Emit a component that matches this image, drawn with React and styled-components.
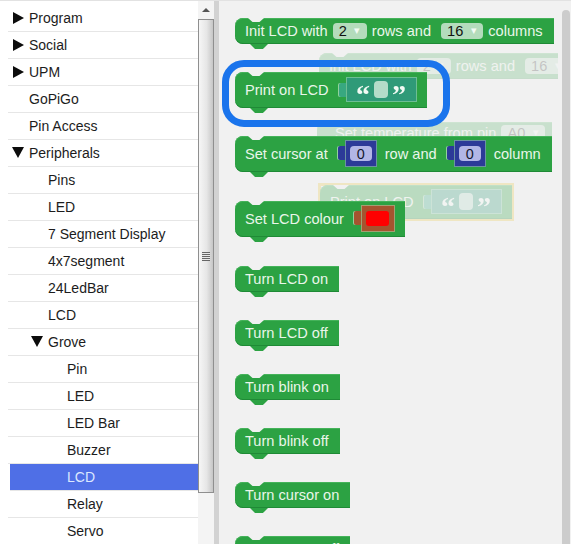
import React from 'react'
import styled, { createGlobalStyle } from 'styled-components'

const Global = createGlobalStyle`
    html, body {
        margin: 0;
        padding: 0;
        background: #ffffff;
    }
    body {
        font-family: "Liberation Sans", Arial, sans-serif;
    }
`

const tree = [
    { label: 'Program', level: 0, arrow: 'closed' },
    { label: 'Social', level: 0, arrow: 'closed' },
    { label: 'UPM', level: 0, arrow: 'closed' },
    { label: 'GoPiGo', level: 0 },
    { label: 'Pin Access', level: 0 },
    { label: 'Peripherals', level: 0, arrow: 'open' },
    { label: 'Pins', level: 1 },
    { label: 'LED', level: 1 },
    { label: '7 Segment Display', level: 1 },
    { label: '4x7segment', level: 1 },
    { label: '24LedBar', level: 1 },
    { label: 'LCD', level: 1 },
    { label: 'Grove', level: 1, arrow: 'open' },
    { label: 'Pin', level: 2 },
    { label: 'LED', level: 2 },
    { label: 'LED Bar', level: 2 },
    { label: 'Buzzer', level: 2 },
    { label: 'LCD', level: 2, selected: true },
    { label: 'Relay', level: 2 },
    { label: 'Servo', level: 2 },
]

function Dropdown({ value, spaced }) {
    return (
        <Pill $spaced={spaced}>
            {value}
            <Caret>▾</Caret>
        </Pill>
    )
}

function TextSocket() {
    return (
        <Socket $bg="#2f9a78" $tab="#38a880" $width={71} $height={25}>
            <Quote>“</Quote>
            <TextHole />
            <Quote>”</Quote>
        </Socket>
    )
}

function NumberSocket() {
    return (
        <Socket $bg="#2c3a98" $width={32} $height={27}>
            <NumberHole>0</NumberHole>
        </Socket>
    )
}

function App() {
    return (
        <Page>
            <Global />
            <Sidebar>
                <Tree>
                    {tree.map((item, i) => (
                        <Row key={i} $level={item.level} $selected={item.selected}>
                            <Toggle $arrow={item.arrow} />
                            {item.label}
                        </Row>
                    ))}
                </Tree>
                <Scrollbar>
                    <ScrollButton />
                    <Thumb>
                        <Grip />
                    </Thumb>
                </Scrollbar>
            </Sidebar>
            <Splitter />
            <Workspace>
                <Ghost $left={100} $top={52} $width={239}>
                    <Block $pr={10}>
                        Init LCD with
                        <Dropdown value="2" />
                        rows and
                        <Dropdown value="16" spaced />
                    </Block>
                </Ghost>
                <Ghost $left={98} $top={121}>
                    <Block $pr={7} $pl={18} $h={22}>
                        Set temperature from pin
                        <Dropdown value="A0" />
                    </Block>
                </Ghost>
                <Ghost $left={101} $top={184} $outline>
                    <Block $pr={10} $h={34} $gap={8}>
                        Print on LCD
                        <TextSocket />
                    </Block>
                </Ghost>

                <Blocks>
                    <Block $pr={11}>
                        Init LCD with
                        <Dropdown value="2" />
                        rows and
                        <Dropdown value="16" spaced />
                        columns
                    </Block>
                    <Block $h={36} $pr={10} $gap={8}>
                        Print on LCD
                        <TextSocket />
                    </Block>
                    <Block $h={36} $pr={11} $gap={8}>
                        Set cursor at
                        <NumberSocket />
                        row and
                        <NumberSocket />
                        column
                    </Block>
                    <Block $h={36} $pr={10} $gap={8} $mt={1}>
                        Set LCD colour
                        <Socket $bg="#a5542f" $width={34} $height={27}>
                            <Swatch />
                        </Socket>
                    </Block>
                    <Block $pr={11} $mt={1}>Turn LCD on</Block>
                    <Block $pr={11}>Turn LCD off</Block>
                    <Block $pr={11}>Turn blink on</Block>
                    <Block $pr={11}>Turn blink off</Block>
                    <Block $pr={11}>Turn cursor on</Block>
                    <Block $pr={11}>Turn cursor off</Block>
                </Blocks>
                <Highlight />
                <WorkspaceBar />
            </Workspace>
        </Page>
    )
}

const Page = styled.div`
    display: flex;
    width: 571px;
    height: 544px;
    overflow: hidden;
    border-top: 1px solid #e2e2e2;
    box-sizing: border-box;
`
const Sidebar = styled.div`
    display: flex;
    flex: none;
    width: 214px;
    background: #ffffff;
`
const Tree = styled.div`
    flex: none;
    width: 190px;
    margin-left: 8px;
    padding-top: 4px;
`
const Row = styled.div`
    display: flex;
    align-items: center;
    box-sizing: border-box;
    height: 27px;
    padding-left: ${p => (p.$selected ? 2 : 4) + p.$level * 19}px;
    margin-left: ${p => (p.$selected ? 2 : 0)}px;
    font-size: 14px;
    color: ${p => (p.$selected ? '#dce8ff' : '#1c1c1c')};
    background: ${p => (p.$selected ? '#4f6fe6' : 'transparent')};
    border-bottom: 1px solid #e6e6e6;
`
const Toggle = styled.span`
    flex: none;
    width: 17px;
    height: 12px;
    &::before {
        content: '';
        display: block;
        width: 0;
        height: 0;
        ${p => p.$arrow === 'closed' && `
            border-left: 11px solid #0c0c0c;
            border-top: 6px solid transparent;
            border-bottom: 6px solid transparent;
            margin-left: 1px;
        `}
        ${p => p.$arrow === 'open' && `
            border-top: 11px solid #0c0c0c;
            border-left: 6px solid transparent;
            border-right: 6px solid transparent;
        `}
    }
`
const Scrollbar = styled.div`
    flex: none;
    width: 16px;
    background: #f4f4f4;
`
const ScrollButton = styled.div`
    height: 18px;
    display: flex;
    align-items: center;
    justify-content: center;
    &::before {
        content: '';
        border-bottom: 4px solid #555555;
        border-left: 4px solid transparent;
        border-right: 4px solid transparent;
    }
`
const Thumb = styled.div`
    display: flex;
    align-items: center;
    justify-content: center;
    box-sizing: border-box;
    height: 474px;
    border: 1px solid #8f8f8f;
    background: linear-gradient(90deg, #f6f6f6, #e6e6e6 55%, #c6c6c6);
`
const Grip = styled.div`
    width: 8px;
    height: 9px;
    background: repeating-linear-gradient(180deg, #666666 0 1px, #e8e8e8 1px 2px);
`
const Splitter = styled.div`
    flex: none;
    width: 5px;
    background: #d2d2d2;
`
const Workspace = styled.div`
    position: relative;
    display: flex;
    flex: 1;
    min-width: 0;
    background: #f1f1f1;
`
const Blocks = styled.div`
    position: relative;
    flex: 1;
    display: flex;
    flex-direction: column;
    align-items: flex-start;
    gap: 28px;
    padding: 17px 0 0 16px;
`
const Block = styled.div`
    position: relative;
    flex: none;
    display: inline-flex;
    align-items: center;
    gap: ${p => p.$gap ?? 5}px;
    height: ${p => p.$h ?? 26}px;
    box-sizing: border-box;
    margin-top: ${p => p.$mt ?? 0}px;
    padding: 0 ${p => p.$pr}px 1px ${p => p.$pl ?? 10}px;
    font-size: 14.6px;
    white-space: nowrap;
    color: #eaf6ea;
    background: #2ca243;
    border-radius: 8px 0 0 8px;
    box-shadow: inset 0 1px 0 #45b35a, inset 0 -1px 0 #1f8a36;

    &::before {
        content: '';
        position: absolute;
        left: 13px;
        top: 0;
        width: 16px;
        height: 4px;
        background: #f1f1f1;
        clip-path: polygon(0 0, 100% 0, 72% 100%, 28% 100%);
    }
    &::after {
        content: '';
        position: absolute;
        left: 15px;
        bottom: -5px;
        width: 18px;
        height: 5px;
        background: #2ca243;
        clip-path: polygon(0 0, 100% 0, 72% 100%, 28% 100%);
    }
`
const Pill = styled.span`
    display: inline-flex;
    align-items: center;
    box-sizing: border-box;
    height: 16px;
    margin-left: ${p => (p.$spaced ? 5 : 0)}px;
    padding: 0 5px 0 6px;
    gap: 6px;
    border-radius: 4px;
    color: #111111;
    background: #b4dcbc;
`
const Caret = styled.span`
    width: 9px;
    text-align: center;
    font-size: 11px;
    color: #f4fbf5;
`
const Socket = styled.span`
    position: relative;
    display: inline-flex;
    align-items: center;
    justify-content: center;
    gap: 4px;
    box-sizing: border-box;
    width: ${p => p.$width}px;
    height: ${p => p.$height}px;
    margin-left: 9px;
    background: ${p => p.$bg};
    box-shadow: inset 0 0 0 1px rgba(160, 220, 170, 0.55);

    &::before {
        content: '';
        position: absolute;
        left: -7px;
        top: 6px;
        width: 7px;
        height: 14px;
        background: ${p => p.$tab ?? p.$bg};
        border-radius: 2px 0 0 2px;
        box-shadow: -1px 0 0 rgba(190, 230, 195, 0.7);
    }
`
const Quote = styled.span`
    font-family: "Liberation Serif", "Times New Roman", serif;
    font-size: 28px;
    font-weight: bold;
    line-height: 28px;
    height: 18px;
    color: #f2faf4;
`
const TextHole = styled.span`
    width: 14px;
    height: 17px;
    border-radius: 4px;
    background: #b4dcc9;
`
const NumberHole = styled.span`
    display: flex;
    align-items: center;
    justify-content: center;
    width: 22px;
    height: 15px;
    border-radius: 4px;
    font-size: 14.4px;
    color: #15182e;
    background: #b2b6e6;
`
const Swatch = styled.span`
    width: 23px;
    height: 15px;
    border-radius: 3px;
    background: #ff0000;
`
const Ghost = styled.div`
    position: absolute;
    left: ${p => p.$left}px;
    top: ${p => p.$top}px;
    ${p => p.$width && `width: ${p.$width}px; overflow: hidden;`}
    opacity: 0.2;
    ${p => p.$outline && 'outline: 3px solid #e8c84c; outline-offset: -1px; opacity: 0.28;'}
`
const Highlight = styled.div`
    position: absolute;
    left: 3px;
    top: 59px;
    width: 228px;
    height: 67px;
    box-sizing: border-box;
    border: 7px solid #1a74ec;
    border-radius: 22px;
`
const WorkspaceBar = styled.div`
    flex: none;
    align-self: stretch;
    width: 8px;
    margin: 9px 1px 0 0;
    background: #cccccc;
    border-radius: 4px 4px 0 0;
`

export default App
